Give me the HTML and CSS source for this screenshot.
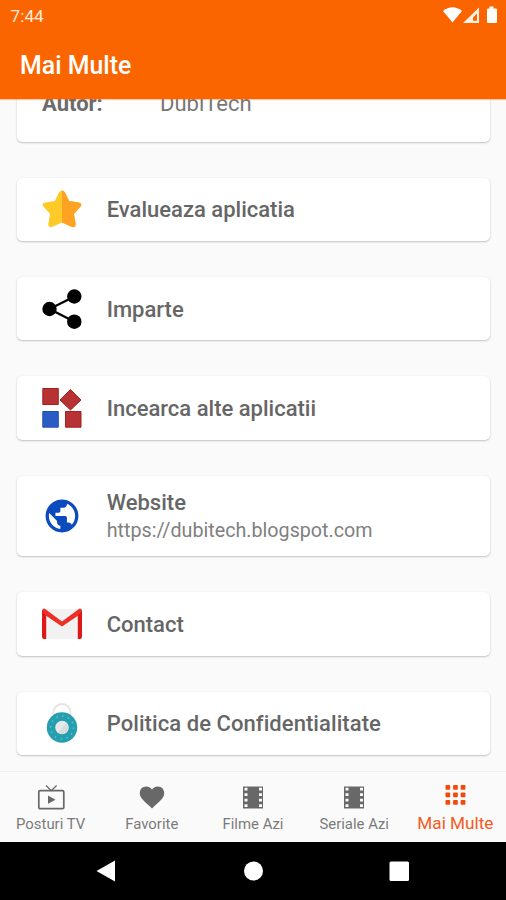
FILE: index.html
```html
<!DOCTYPE html>
<html lang="ro">
<head>
<meta charset="utf-8">
<title>Mai Multe</title>
<link rel="stylesheet" href="styles.css">
</head>
<body>
<div class="screen">
  <header class="appbar">
    <div class="status">
      <span class="clock">7:44</span>
      <svg class="status-icons" viewBox="0 0 56 20" aria-hidden="true">
        <path d="M0 6Q9.500-1.500 19 6L9.500 17.500Z" fill="#fff"/>
        <path fill-rule="evenodd" d="M20 18 36 2.500V18ZM30 15.800H34V8.500L30 12.500Z" fill="#ffefe5"/>
        <path d="M46.500 1.500h4v2H53q1 0 1 1V17q0 1-1 1h-8q-1 0-1-1V4.500q0-1 1-1h1.500Z" fill="#fff"/>
      </svg>
    </div>
    <h1 class="title">Mai Multe</h1>
  </header>

  <main class="content">
    <section class="card card-author"><b class="author-label">Autor:</b><span class="author-name">DubiTech</span></section>

    <section class="card">
      <svg class="icon" viewBox="0 0 40 40" aria-hidden="true">
        <path d="M20 1.500q2 0 3 2l4.200 8.500 9.600 1.500q4 .8 1.800 4l-6.700 7.500 1.700 9.500q.2 5-4 3.300L20 33.500l-9.600 4.300q-4.200 1.700-4-3.300l1.700-9.500-6.700-7.500q-2.200-3.200 1.800-4l9.600-1.500L17 3.500q1-2 3-2Z" fill="#fdca28"/>
        <path d="M20 1.500q2 0 3 2l4.200 8.500 9.600 1.500q4 .8 1.800 4l-6.700 7.500 1.700 9.500q.2 5-4 3.300L20 33.500Z" fill="#fda223"/>
      </svg>
      <span class="label">Evalueaza aplicatia</span>
    </section>

    <section class="card">
      <svg class="icon" viewBox="0 0 40 40" aria-hidden="true">
        <path d="M32.500 7.500 7.500 20l25 12.800" fill="none" stroke="#000" stroke-width="2.300"/>
        <circle cx="32.300" cy="7.500" r="7.200"/><circle cx="7.500" cy="20" r="7.200"/><circle cx="32.300" cy="32.700" r="7.200"/>
      </svg>
      <span class="label">Imparte</span>
    </section>

    <section class="card">
      <svg class="icon" viewBox="0 0 40 40" aria-hidden="true">
        <g fill="#b73232" stroke="#a51f22"><path d="M.8.500h15.500v16H.8zM23.500 23.500H39v15.700H23.500z"/><path d="M28.500 1.500 39 12 28.500 22 18 12Z"/></g>
        <path d="M.8 23.500h15.500v15.700H.8z" fill="#2a5cc3" stroke="#1d50b8"/>
      </svg>
      <span class="label">Incearca alte aplicatii</span>
    </section>

    <section class="card card-tall">
      <svg class="icon" viewBox="0 0 40 40" aria-hidden="true">
        <path transform="translate(.3 .3) scale(1.642)" fill="#0b4bbe" d="M12 2C6.480 2 2 6.480 2 12s4.480 10 10 10 10-4.480 10-10S17.520 2 12 2zm-1 17.930c-3.950-.49-7-3.850-7-7.930 0-.62.080-1.210.21-1.790L9 15v1c0 1.100.9 2 2 2v1.930zm6.900-2.540c-.26-.81-1-1.390-1.900-1.390h-1v-3c0-.55-.45-1-1-1H8v-2h2c.55 0 1-.45 1-1V7h2c1.100 0 2-.9 2-2v-.41c2.930 1.190 5 4.060 5 7.410 0 2.080-.8 3.970-2.100 5.390z"/>
      </svg>
      <div class="stack">
        <span class="label">Website</span>
        <span class="url">https://dubitech.blogspot.com</span>
      </div>
    </section>

    <section class="card">
      <svg class="icon" viewBox="0 0 40 40" aria-hidden="true">
        <path d="M2 5h36v30H2z" fill="#f2f2f2"/>
        <path d="M0 7q0-2.500 2.500-2.500L20 17.500 37.500 4.500Q40 4.500 40 7v2L20 22.500 0 9Z" fill="#ed3027"/>
        <path d="M0 7v25.500Q0 35 2 35h2.200V11.500ZM40 7v25.500q0 2.500-2 2.500h-2.200V11.500Z" fill="#df1717"/>
      </svg>
      <span class="label">Contact</span>
    </section>

    <section class="card">
      <svg class="icon" viewBox="0 0 40 40" aria-hidden="true">
        <circle cx="20" cy="9.500" r="8.500" fill="none" stroke="#e4e4e4" stroke-width="1.800"/>
        <circle cx="20" cy="24.500" r="15.200" fill="#259eae"/>
        <circle cx="20" cy="24.500" r="11.500" fill="none" stroke="#67bfca" stroke-width="1.500" stroke-dasharray="1.500 4.500"/>
        <circle cx="20" cy="24.500" r="6.800" fill="#e5e9e9"/>
        <path d="M16 29.500 24.500 20q2.500 3 1.600 6.500-2.500 5.500-8 4.300Z" fill="#d7dcdc"/>
      </svg>
      <span class="label label-policy">Politica de Confidentialitate</span>
    </section>
  </main>

  <nav class="tabs">
    <div class="tab">
      <svg class="tab-icon" viewBox="0 0 30 26" aria-hidden="true"><g fill="none" stroke="#686868" stroke-width="1.700"><rect x="2.800" y="6.700" width="25" height="18" rx="1.300"/><path d="m10 1.500 5.300 5.200 5.300-5.200" stroke-width="1.300"/></g><path d="M12 11.500v8.300l7.500-4.100Z" fill="#686868"/></svg>
      <span class="tab-label">Posturi TV</span>
    </div>
    <div class="tab">
      <svg class="tab-icon" viewBox="0 0 30 26" aria-hidden="true"><path d="M15 24.500 12.500 22C6 16.300 2.800 13.500 2.800 9 2.800 5.300 5.500 2.500 9.200 2.500c2.200 0 4.500 1 5.800 3 1.300-2 3.600-3 5.800-3 3.700 0 6.400 2.800 6.400 6.500 0 4.500-3.200 7.300-9.700 13Z" fill="#686868"/></svg>
      <span class="tab-label">Favorite</span>
    </div>
    <div class="tab">
      <svg class="tab-icon" viewBox="0 0 30 26" aria-hidden="true"><path d="M5 2.500h20v22H5z" fill="#686868"/><path d="M8 3.700v19.600M22.500 3.700v19.600" stroke="#fafafa" stroke-width="3" stroke-dasharray="2.800 2.700"/></svg>
      <span class="tab-label">Filme Azi</span>
    </div>
    <div class="tab">
      <svg class="tab-icon" viewBox="0 0 30 26" aria-hidden="true"><path d="M5 2.500h20v22H5z" fill="#686868"/><path d="M8 3.700v19.600M22.500 3.700v19.600" stroke="#fafafa" stroke-width="3" stroke-dasharray="2.800 2.700"/></svg>
      <span class="tab-label">Seriale Azi</span>
    </div>
    <div class="tab tab-active">
      <svg class="tab-icon" viewBox="0 0 30 26" aria-hidden="true"><g fill="#f34a0c"><rect x="5.500" y="3" width="4.700" height="4.700" rx=".8"/><rect x="13.100" y="3" width="4.700" height="4.700" rx=".8"/><rect x="20.700" y="3" width="4.700" height="4.700" rx=".8"/><rect x="5.500" y="10.500" width="4.700" height="4.700" rx=".8"/><rect x="13.100" y="10.500" width="4.700" height="4.700" rx=".8"/><rect x="20.700" y="10.500" width="4.700" height="4.700" rx=".8"/><rect x="5.500" y="18" width="4.700" height="4.700" rx=".8"/><rect x="13.100" y="18" width="4.700" height="4.700" rx=".8"/><rect x="20.700" y="18" width="4.700" height="4.700" rx=".8"/></g></svg>
      <span class="tab-label">Mai Multe</span>
    </div>
  </nav>

  <footer class="sysbar">
    <svg viewBox="0 0 506 58" aria-hidden="true" fill="#fff"><path d="M96.500 29 115 18.500v21Z"/><circle cx="253.500" cy="29" r="9.500"/><rect x="389.500" y="19.500" width="19.500" height="19.500" rx="1.500"/></svg>
  </footer>
</div>
</body>
</html>
```
FILE: styles.css
```css
* { box-sizing: border-box; }
body { margin: 0; font-family: Roboto, sans-serif; background: #fafafa; }
.screen { width: 506px; height: 900px; overflow: hidden; display: flex; flex-direction: column; }

.appbar { height: 98.500px; flex: none; background: #fb6500; color: #fff; position: relative; z-index: 1; box-shadow: 0 1px 1px rgba(251, 101, 0, .35); }
.status { height: 32px; padding: 0 7px 0 10.500px; display: flex; align-items: center; justify-content: space-between; }
.clock { font-size: 17.300px; color: #ffe9db; }
.status-icons { width: 56px; height: 20px; margin-top: -2px; }
.title { margin: 0; padding-left: 20px; height: 67px; line-height: 68px; font-size: 24.900px; font-weight: 500; white-space: nowrap; }

.content { flex: 1; min-height: 0; overflow: hidden; padding: 0 16px 0 17px; display: flex; flex-direction: column; gap: 36px; }
.card { flex: none; height: 63.400px; padding-left: 25px; display: flex; align-items: center; gap: 24.700px; background: #fff; border-radius: 5px; box-shadow: 0 1px 2px rgba(0, 0, 0, .22), 0 0 1px rgba(0, 0, 0, .08); }
.card-author { height: 60px; margin-top: -17px; gap: 0; align-items: flex-start; padding-top: 9px; font-size: 22px; line-height: 26px; color: #6b6b6b; }
.author-label { width: 118px; font-weight: 700; }
.author-name { color: #777; }
.card-tall { height: 80.500px; }
.icon { width: 40px; height: 40px; flex: none; }
.label { position: relative; top: 1px; font-size: 22px; line-height: 28px; font-weight: 500; color: #666; white-space: nowrap; }
.label-policy { letter-spacing: .07px; }
.stack { display: flex; flex-direction: column; padding-top: 2px; }
.url { font-size: 19.700px; line-height: 29px; color: #808080; white-space: nowrap; }

.tabs { flex: none; height: 71px; display: grid; grid-template-columns: repeat(5, 1fr); border-top: 1px solid #eee; background: #fafafa; }
.tab { display: flex; flex-direction: column; align-items: center; padding-top: 12px; }
.tab-icon { width: 30px; height: 26px; }
.tab-label { font-size: 14.900px; line-height: 20px; margin-top: 4px; color: #7a7a7a; white-space: nowrap; }
.tab-active { padding-top: 10px; }
.tab-active .tab-label { font-size: 17.200px; margin-top: 5px; color: #f65a20; }
.sysbar { flex: none; height: 58px; background: #000; }
.sysbar svg { display: block; width: 506px; height: 58px; }
```
